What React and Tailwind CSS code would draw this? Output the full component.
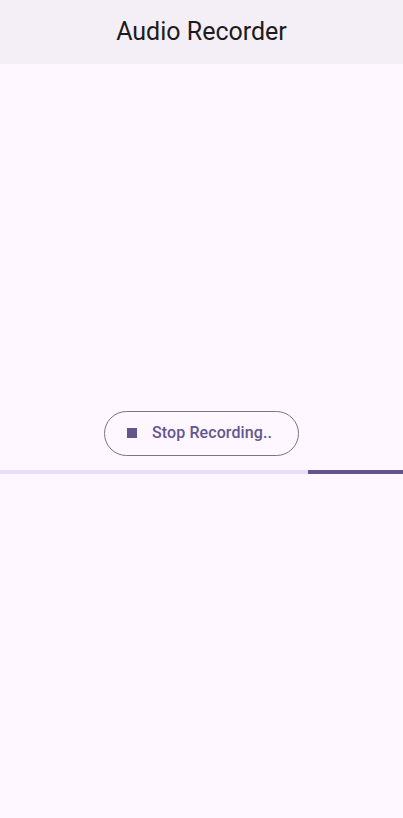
export default function App() {
  return (
    <div className="flex h-[818px] w-full flex-col bg-[#fef7ff]" style={{ fontFamily: "Roboto, 'Noto Sans', sans-serif" }}>
      <header className="flex h-[64px] shrink-0 items-center justify-center bg-[#f4eff6]">
        <h1 className="text-[25px] font-normal leading-[30px] text-[#1d1b20]">Audio Recorder</h1>
      </header>
      <main className="flex flex-1 flex-col items-center justify-center pt-[2px]">
        <button className="flex h-[45px] w-[195px] items-center rounded-full border border-[#79747e] pl-[22px]">
          <span className="h-[10px] w-[10px] bg-[#65558f]" />
          <span className="ml-[15px] text-[16px] font-medium leading-[20px] tracking-[0.1px] text-[#65558f]">Stop Recording..</span>
        </button>
        <div className="mt-[14px] flex h-[4px] w-full">
          <div className="h-full flex-1 bg-[#e8def8]" />
          <div className="h-full w-[95px] bg-[#65558f]" />
        </div>
      </main>
    </div>
  );
}
